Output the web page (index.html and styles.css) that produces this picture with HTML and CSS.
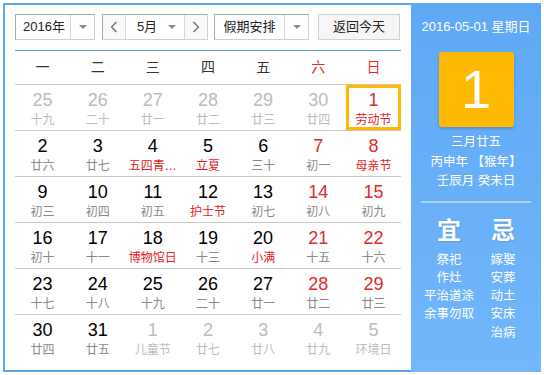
FILE: index.html
```html
<!DOCTYPE html>
<html lang="zh-CN">
<head>
	<meta charset="UTF-8">
	<title>万年历</title>
	<link rel="stylesheet" href="styles.css">
</head>
<body>

<div class="calendar">
	<div class="main">
		<div class="toolbar">
			<div class="sel sel-year">
				<span class="sel-text">2016年</span>
				<span class="sel-arrow"><i class="tri"></i></span>
			</div>
			<div class="sel sel-month">
				<span class="nav"><svg width="8" height="12" viewBox="0 0 8 12"><polyline points="6.5,1 1.5,6 6.5,11" fill="none" stroke="#666" stroke-width="1.2"/></svg></span>
				<span class="month-box"><span class="sel-text">5月</span><i class="tri"></i></span>
				<span class="nav"><svg width="8" height="12" viewBox="0 0 8 12"><polyline points="1.5,1 6.5,6 1.5,11" fill="none" stroke="#666" stroke-width="1.2"/></svg></span>
			</div>
			<div class="sel sel-holiday">
				<span class="sel-text">假期安排</span>
				<span class="sel-arrow"><i class="tri"></i></span>
			</div>
			<div class="btn-today">返回今天</div>
		</div>

		<div class="week">
			<span>一</span><span>二</span><span>三</span><span>四</span><span>五</span><span class="red">六</span><span class="red">日</span>
		</div>

		<div class="days">
			<div class="row">
				<div class="day other"><b>25</b><em>十九</em></div>
				<div class="day other"><b>26</b><em>二十</em></div>
				<div class="day other"><b>27</b><em>廿一</em></div>
				<div class="day other"><b>28</b><em>廿二</em></div>
				<div class="day other"><b>29</b><em>廿三</em></div>
				<div class="day other"><b>30</b><em>廿四</em></div>
				<div class="day weekend today"><b>1</b><em class="fest">劳动节</em></div>
			</div>
			<div class="row">
				<div class="day"><b>2</b><em>廿六</em></div>
				<div class="day"><b>3</b><em>廿七</em></div>
				<div class="day"><b>4</b><em class="fest">五四青…</em></div>
				<div class="day"><b>5</b><em class="fest">立夏</em></div>
				<div class="day"><b>6</b><em>三十</em></div>
				<div class="day weekend"><b>7</b><em>初一</em></div>
				<div class="day weekend"><b>8</b><em class="fest">母亲节</em></div>
			</div>
			<div class="row">
				<div class="day"><b>9</b><em>初三</em></div>
				<div class="day"><b>10</b><em>初四</em></div>
				<div class="day"><b>11</b><em>初五</em></div>
				<div class="day"><b>12</b><em class="fest">护士节</em></div>
				<div class="day"><b>13</b><em>初七</em></div>
				<div class="day weekend"><b>14</b><em>初八</em></div>
				<div class="day weekend"><b>15</b><em>初九</em></div>
			</div>
			<div class="row">
				<div class="day"><b>16</b><em>初十</em></div>
				<div class="day"><b>17</b><em>十一</em></div>
				<div class="day"><b>18</b><em class="fest">博物馆日</em></div>
				<div class="day"><b>19</b><em>十三</em></div>
				<div class="day"><b>20</b><em class="fest">小满</em></div>
				<div class="day weekend"><b>21</b><em>十五</em></div>
				<div class="day weekend"><b>22</b><em>十六</em></div>
			</div>
			<div class="row">
				<div class="day"><b>23</b><em>十七</em></div>
				<div class="day"><b>24</b><em>十八</em></div>
				<div class="day"><b>25</b><em>十九</em></div>
				<div class="day"><b>26</b><em>二十</em></div>
				<div class="day"><b>27</b><em>廿一</em></div>
				<div class="day weekend"><b>28</b><em>廿二</em></div>
				<div class="day weekend"><b>29</b><em>廿三</em></div>
			</div>
			<div class="row last">
				<div class="day"><b>30</b><em>廿四</em></div>
				<div class="day"><b>31</b><em>廿五</em></div>
				<div class="day other"><b>1</b><em>儿童节</em></div>
				<div class="day other"><b>2</b><em>廿七</em></div>
				<div class="day other"><b>3</b><em>廿八</em></div>
				<div class="day other"><b>4</b><em>廿九</em></div>
				<div class="day other"><b>5</b><em>环境日</em></div>
			</div>
		</div>
	</div>

	<div class="side">
		<div class="side-date">2016-05-01 星期日</div>
		<div class="side-day">1</div>
		<div class="side-lunar">
			<p>三月廿五</p>
			<p>丙申年 【猴年】</p>
			<p>壬辰月 癸未日</p>
		</div>
		<div class="side-line"></div>
		<div class="yiji">
			<div class="col">
				<h3>宜</h3>
				<p>祭祀</p>
				<p>作灶</p>
				<p>平治道涂</p>
				<p>余事勿取</p>
			</div>
			<div class="col">
				<h3>忌</h3>
				<p>嫁娶</p>
				<p>安葬</p>
				<p>动土</p>
				<p>安床</p>
				<p>治病</p>
			</div>
		</div>
	</div>
</div>

</body>
</html>
```

FILE: styles.css
```css
body {
	margin: 0;
	font-family: "Liberation Sans", "Noto Sans CJK SC", sans-serif;
	background: #fff;
}
.calendar {
	margin: 3px;
	width: 536px;
	height: 365px;
	border: 2px solid #5aa8f2;
	border-right: 0;
	display: flex;
}

/* left part */
.main {
	width: 386px;
	padding: 9px 10px 0 10px;
}
.toolbar {
	display: flex;
	height: 26px;
	padding-bottom: 10px;
	border-bottom: 1px solid #4ea6f5;
	font-size: 13px;
	color: #222;
}
.sel {
	display: flex;
	box-sizing: border-box;
	height: 26px;
	border: 1px solid #cfcfcf;
	border-top-color: #a8a8a8;
	border-left-color: #a8a8a8;
	background: #fff;
}
.sel-text {
	flex: 1;
	text-align: center;
	line-height: 24px;
}
.sel-arrow {
	width: 23px;
	border-left: 1px solid #d6d6d6;
	display: flex;
	align-items: center;
	justify-content: center;
}
.tri {
	width: 0;
	height: 0;
	border: 4px solid transparent;
	border-top: 4px solid #888;
	border-bottom: 0;
}
.sel-year {
	width: 80px;
}
.sel-year .sel-text {
	padding-left: 2px;
}
.sel-month {
	width: 106px;
	margin-left: 7px;
}
.nav {
	width: 22px;
	display: flex;
	align-items: center;
	justify-content: center;
	background: #fafafa;
}
.month-box {
	flex: 1;
	display: flex;
	align-items: center;
	border-left: 1px solid #d6d6d6;
	border-right: 1px solid #d6d6d6;
	padding-right: 8px;
}
.sel-holiday {
	width: 95px;
	margin-left: 6px;
}
.btn-today {
	margin-left: 9px;
	width: 82px;
	box-sizing: border-box;
	height: 26px;
	line-height: 24px;
	text-align: center;
	border: 1px solid #d0d0d0;
	background: #f6f6f6;
}

.week {
	display: grid;
	grid-template-columns: repeat(7, 1fr);
	height: 33px;
	line-height: 33px;
	border-bottom: 1px solid #c8c8c8;
	text-align: center;
	font-size: 14px;
	color: #333;
}
.red {
	color: #e12a2a;
}

.row {
	display: grid;
	grid-template-columns: repeat(7, 1fr);
	border-bottom: 1px solid #c8c8c8;
}
.row.last {
	border-bottom: 0;
}
.day {
	height: 45px;
	box-sizing: border-box;
	padding-top: 5px;
	text-align: center;
	overflow: hidden;
}
.day b {
	display: block;
	font-weight: normal;
	font-size: 18px;
	line-height: 20px;
	color: #000;
}
.day em {
	display: block;
	font-style: normal;
	font-size: 12px;
	line-height: 20px;
	color: #888;
	white-space: nowrap;
}
.day em.fest {
	color: #e41c1c;
}
.day.weekend b {
	color: #e12a2a;
}
.day.other b,
.day.other em {
	color: #bbb;
}
.day.today {
	box-shadow: inset 0 0 0 3px #ffb900;
	width: 55px;
	justify-self: end;
}

/* right panel */
.side {
	width: 130px;
	margin-top: -2px;
	margin-bottom: -2px;
	background: linear-gradient(#5ea8f5, #72b7fb);
	color: #fff;
	text-align: center;
}
.side-date {
	margin-top: 16px;
	font-size: 13px;
	line-height: 16px;
}
.side-day {
	width: 75px;
	height: 75px;
	margin: 17px auto 0;
	background: #ffb900;
	border-radius: 3px;
	box-shadow: 0 2px 3px rgba(0, 0, 0, .18);
	font-size: 54px;
	line-height: 75px;
}
.side-lunar {
	margin-top: 6px;
	font-size: 12.5px;
}
.side-lunar p {
	margin: 0;
	line-height: 19.5px;
}
.side-line {
	height: 2px;
	margin: 9px 10px 0 10px;
	background: rgba(255, 255, 255, .45);
}
.yiji {
	display: flex;
	justify-content: center;
	margin-top: 13px;
}
.yiji .col {
	width: 54px;
}
.yiji h3 {
	margin: 0 0 5px 0;
	font-size: 24px;
	line-height: 30px;
	font-weight: bold;
	text-shadow: 1px 1px 1px rgba(0, 0, 0, .12);
}
.yiji p {
	margin: 0;
	font-size: 12.5px;
	line-height: 18.3px;
	white-space: nowrap;
}
```
